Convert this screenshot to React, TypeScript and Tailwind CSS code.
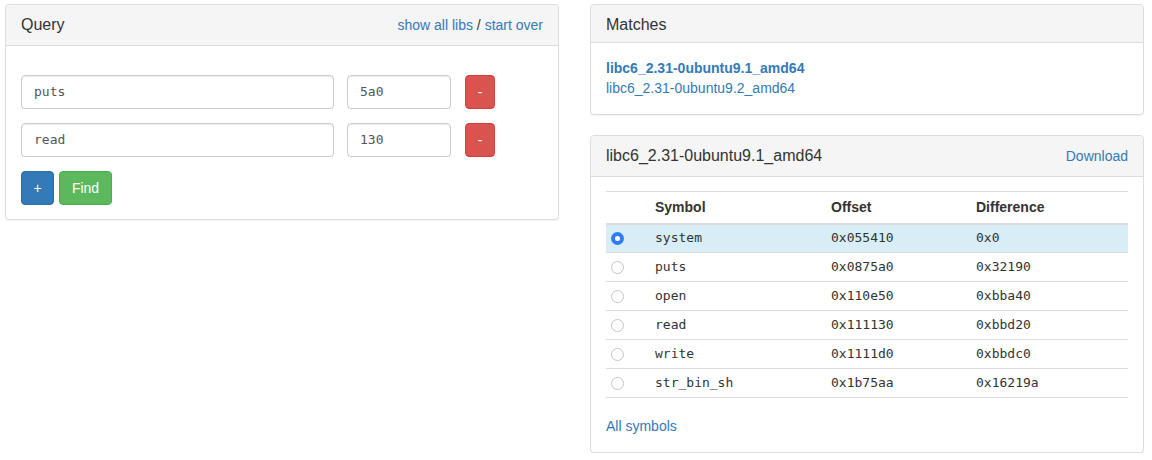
const mono = "font-['DejaVu_Sans_Mono','Liberation_Mono',monospace]";

const queries = [
  { name: "puts", offset: "5a0" },
  { name: "read", offset: "130" },
];

const symbols = [
  { name: "system", offset: "0x055410", diff: "0x0" },
  { name: "puts", offset: "0x0875a0", diff: "0x32190" },
  { name: "open", offset: "0x110e50", diff: "0xbba40" },
  { name: "read", offset: "0x111130", diff: "0xbbd20" },
  { name: "write", offset: "0x1111d0", diff: "0xbbdc0" },
  { name: "str_bin_sh", offset: "0x1b75aa", diff: "0x16219a" },
];

function Radio({ checked }: { checked: boolean }) {
  if (checked) {
    return (
      <span className="flex h-[13px] w-[13px] items-center justify-center rounded-full bg-[#2f7df6]">
        <span className="h-[5px] w-[5px] rounded-full bg-white" />
      </span>
    );
  }
  return <span className="block h-[13px] w-[13px] rounded-full border border-[#c4c4c4] bg-white" />;
}

export default function App() {
  return (
    <div className="flex gap-[31px] bg-white pl-[5px] pt-[4px] font-['Liberation_Sans',Arial,sans-serif] text-[14px] leading-[20px] text-[#333]">
      {/* left column */}
      <div className="w-[554px]">
        <div className="rounded-[4px] border border-[#ddd] bg-white shadow-[0_1px_1px_rgba(0,0,0,0.05)]">
          <div className="flex h-[41px] items-center justify-between rounded-t-[4px] border-b border-[#ddd] bg-[#f5f5f5] px-[15px]">
            <h3 className="text-[16px] leading-[18px]">Query</h3>
            <div>
              <a className="text-[#337ab7]">show all libs</a> / <a className="text-[#337ab7]">start over</a>
            </div>
          </div>
          <div className="px-[15px] pb-[14px] pt-[29px]">
            {queries.map((q) => (
              <div key={q.name} className="mb-[14px] flex items-center">
                <div className={`flex h-[34px] w-[313px] items-center rounded-[4px] border border-[#ccc] px-[12px] text-[13px] text-[#555] shadow-[inset_0_1px_1px_rgba(0,0,0,0.075)] ${mono}`}>
                  {q.name}
                </div>
                <div className={`ml-[13px] flex h-[34px] w-[104px] items-center rounded-[4px] border border-[#ccc] px-[12px] text-[13px] text-[#555] shadow-[inset_0_1px_1px_rgba(0,0,0,0.075)] ${mono}`}>
                  {q.offset}
                </div>
                <button className="ml-[14px] h-[34px] w-[30px] rounded-[4px] border border-[#d43f3a] bg-[#d9534f] text-white">
                  -
                </button>
              </div>
            ))}
            <div className="flex gap-[5px]">
              <button className="h-[34px] w-[33px] rounded-[4px] border border-[#2e6da4] bg-[#337ab7] text-white">+</button>
              <button className="h-[34px] w-[53px] rounded-[4px] border border-[#4cae4c] bg-[#5cb85c] text-white">Find</button>
            </div>
          </div>
        </div>
      </div>

      {/* right column */}
      <div className="flex w-[554px] flex-col gap-[20px]">
        <div className="rounded-[4px] border border-[#ddd] bg-white shadow-[0_1px_1px_rgba(0,0,0,0.05)]">
          <div className="rounded-t-[4px] border-b border-[#ddd] bg-[#f5f5f5] px-[15px] pb-[9px] pt-[11px]">
            <h3 className="text-[16px] leading-[17px]">Matches</h3>
          </div>
          <div className="flex flex-col px-[15px] pb-[16px] pt-[15px]">
            <a className="font-bold text-[#337ab7]">libc6_2.31-0ubuntu9.1_amd64</a>
            <a className="text-[#337ab7]">libc6_2.31-0ubuntu9.2_amd64</a>
          </div>
        </div>

        <div className="rounded-[4px] border border-[#ddd] bg-white shadow-[0_1px_1px_rgba(0,0,0,0.05)]">
          <div className="flex h-[41px] items-center justify-between rounded-t-[4px] border-b border-[#ddd] bg-[#f5f5f5] px-[15px]">
            <h3 className="text-[16px] leading-[18px]">libc6_2.31-0ubuntu9.1_amd64</h3>
            <a className="text-[#337ab7]">Download</a>
          </div>
          <div className="px-[15px] pb-[16px] pt-[14px]">
            <table className="mb-[18px] w-full table-fixed border-collapse">
              <colgroup>
                <col className="w-[41px]" />
                <col className="w-[176px]" />
                <col className="w-[145px]" />
                <col />
              </colgroup>
              <thead>
                <tr className="border-t border-b-2 border-[#ddd]">
                  <th className="h-[32px]" />
                  <th className="pl-[8px] text-left font-bold">Symbol</th>
                  <th className="pl-[8px] text-left font-bold">Offset</th>
                  <th className="pl-[8px] text-left font-bold">Difference</th>
                </tr>
              </thead>
              <tbody className={`text-[13px] ${mono}`}>
                {symbols.map((s, i) => (
                  <tr key={s.name} className={`border-b border-[#ddd] ${i === 0 ? "bg-[#d9edf7]" : ""}`}>
                    <td className="h-[29px] pl-[5px]">
                      <Radio checked={i === 0} />
                    </td>
                    <td className="pl-[8px]">{s.name}</td>
                    <td className="pl-[8px]">{s.offset}</td>
                    <td className="pl-[8px]">{s.diff}</td>
                  </tr>
                ))}
              </tbody>
            </table>
            <a className="text-[#337ab7]">All symbols</a>
          </div>
        </div>
      </div>
    </div>
  );
}
